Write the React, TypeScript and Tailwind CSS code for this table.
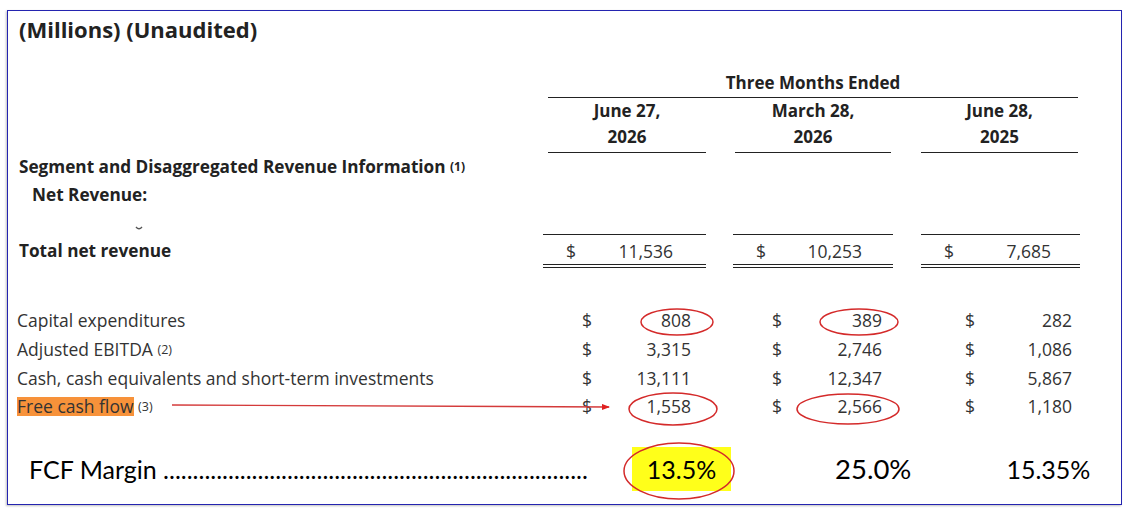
import React from "react";

const body = { fontFamily: '"Open Sans", "Noto Sans", sans-serif' };
const cal = { fontFamily: 'Lato, "Open Sans", sans-serif' };

const grid = "grid grid-cols-[526px_163px_27px_160px_28px_159px]";

type Row = { label: React.ReactNode; v: [string, string, string] };

const rows: Row[] = [
  { label: "Capital expenditures", v: ["808", "389", "282"] },
  {
    label: (
      <>
        Adjusted EBITDA <sup className="text-[12.5px] relative -top-[2px]">(2)</sup>
      </>
    ),
    v: ["3,315", "2,746", "1,086"],
  },
  { label: "Cash, cash equivalents and short-term investments", v: ["13,111", "12,347", "5,867"] },
  {
    label: (
      <>
        <span className="inline-block bg-[#f7923a] h-[19px] leading-[19px]">Free cash flow</span>{" "}
        <sup className="text-[12.5px] relative -top-[2px]">(3)</sup>
      </>
    ),
    v: ["1,558", "2,566", "1,180"],
  },
];

function Cell({ v, dl, pr }: { v: string; dl: string; pr: string }) {
  return (
    <div className={`flex justify-between items-center ${dl} ${pr}`}>
      <span>$</span>
      <span>{v}</span>
    </div>
  );
}

export default function App() {
  return (
    <div className="w-[1125px] h-[512px] bg-white relative overflow-hidden text-[#333]" style={body}>
      <div className="ml-[7px] mt-[10px] w-[1115px] h-[495px] border border-[#2424b0] shadow-[-1px_1px_2px_rgba(0,0,0,0.25)]">
        <div className="pl-[11px] pt-[4px] h-[38px] text-[22px] font-bold leading-[28px] text-[#222]">
          (Millions) (Unaudited)
        </div>

        <div className="pl-[9px]">
          {/* Three Months Ended */}
          <div className={`${grid} mt-[23px]`}>
            <div />
            <div className="col-span-5 ml-[5px] mr-[2px] border-b border-[#222] pb-[3px] text-center text-[17px] leading-[22px] font-bold text-[#222]">
              Three Months Ended
            </div>
          </div>

          {/* dates */}
          <div className={`${grid} text-[17px] font-bold leading-[26px] text-[#222]`}>
            <div />
            <div className="ml-[5px] border-b border-[#222] pb-[2px] text-center">
              June 27,
              <br />
              2026
            </div>
            <div />
            <div className="ml-[2px] mr-[2px] border-b border-[#222] pb-[2px] text-center">
              March 28,
              <br />
              2026
            </div>
            <div />
            <div className="mr-[2px] border-b border-[#222] pb-[2px] text-center">
              June 28,
              <br />
              2025
            </div>
          </div>

          <div className="mt-[3px] pl-[2px] text-[17.2px] font-bold leading-[22px] text-[#222]">
            Segment and Disaggregated Revenue Information{" "}
            <sup className="text-[12px] relative -top-[2px]">(1)</sup>
          </div>
          <div className="mt-[6px] pl-[15px] text-[17.2px] font-bold leading-[22px] text-[#222]">Net Revenue:</div>
          <div className="h-[28px] pl-[118px] pt-[20px]">
            <svg width="8" height="5" viewBox="0 0 8 5" className="block">
              <path d="M1 1 Q4 4.5 7 1" stroke="#555" strokeWidth="1.4" fill="none" />
            </svg>
          </div>

          {/* Total */}
          <div className={`${grid} text-[17.5px] leading-[22px]`}>
            <div className="pt-[6px] pl-[2px] font-bold text-[17.2px] text-[#222]">Total net revenue</div>
            <div className="border-t border-[#222] pt-[5px]">
              <div className="border-b-[4px] border-double border-[#222] pb-[2px]">
                <Cell v="11,536" dl="pl-[23px]" pr="pr-[33px]" />
              </div>
            </div>
            <div />
            <div className="border-t border-[#222] pt-[5px]">
              <div className="border-b-[4px] border-double border-[#222] pb-[2px]">
                <Cell v="10,253" dl="pl-[23px]" pr="pr-[31px]" />
              </div>
            </div>
            <div />
            <div className="border-t border-[#222] pt-[5px]">
              <div className="border-b-[4px] border-double border-[#222] pb-[2px]">
                <Cell v="7,685" dl="pl-[23px]" pr="pr-[29px]" />
              </div>
            </div>
          </div>

          {/* data rows */}
          <div className="mt-[38px] text-[17.5px]">
            {rows.map((r, i) => (
              <div key={i} className={`${grid} h-[28.67px] items-center`}>
                <div className="whitespace-nowrap">{r.label}</div>
                <Cell v={r.v[0]} dl="pl-[39px]" pr="pr-[15px]" />
                <div />
                <Cell v={r.v[1]} dl="pl-[39px]" pr="pr-[11px]" />
                <div />
                <Cell v={r.v[2]} dl="pl-[44px]" pr="pr-[8px]" />
              </div>
            ))}
          </div>

          {/* FCF Margin */}
          <div className="mt-[26px] flex items-center text-black text-[25px] leading-[34px]" style={cal}>
            <div className="ml-[12px] w-[559px] whitespace-nowrap overflow-hidden">
              FCF Margin {".".repeat(120)}
            </div>
            <div className="ml-[43px] w-[101px] flex justify-center">
              <span className="inline-block bg-[#ffff1a] px-[15px] py-[5px]">13.5%</span>
            </div>
            <div className="ml-[103px] text-[27.5px]">25.0%</div>
            <div className="ml-[95px]">15.35%</div>
          </div>
        </div>
      </div>

      {/* annotations */}
      <svg className="absolute inset-0 pointer-events-none" width="1125" height="512" viewBox="0 0 1125 512">
        <defs>
          <marker id="ah" markerWidth="8" markerHeight="6" refX="7" refY="3" orient="auto" markerUnits="userSpaceOnUse">
            <path d="M0 0 L8 3 L0 6 Z" fill="#e02020" />
          </marker>
        </defs>
        <g fill="none" stroke="#d42a2a" strokeWidth="1.5">
          <ellipse cx="677" cy="322" rx="36" ry="13" />
          <ellipse cx="859" cy="322" rx="39" ry="13" />
          <ellipse cx="673" cy="409" rx="44" ry="16" />
          <ellipse cx="848" cy="409" rx="51" ry="15" />
          <ellipse cx="679" cy="471" rx="55" ry="28" />
        </g>
        <line x1="172" y1="405" x2="609" y2="407" stroke="#d43a3a" strokeWidth="1.4" markerEnd="url(#ah)" />
      </svg>
    </div>
  );
}
